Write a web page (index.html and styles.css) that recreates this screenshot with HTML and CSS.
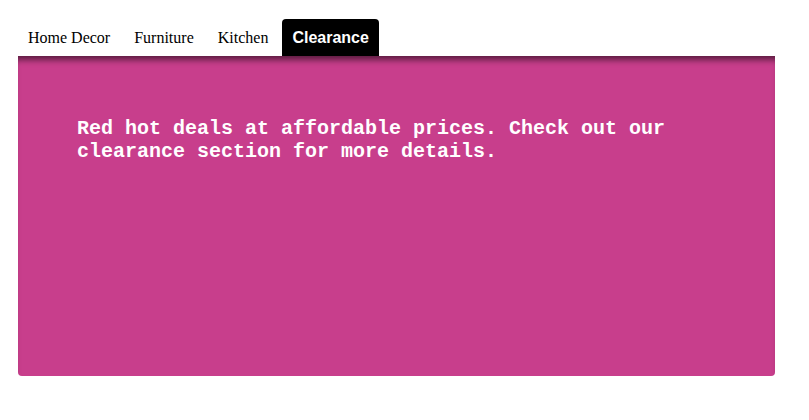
FILE: index.html
```html
<!DOCTYPE html>
<html>
<head>
<meta charset="utf-8">
<link rel="stylesheet" href="styles.css">
</head>
<body>
<div class="wrap">
  <nav class="tabs">
    <a class="tab">Home Decor</a>
    <a class="tab">Furniture</a>
    <a class="tab">Kitchen</a>
    <a class="tab active">Clearance</a>
  </nav>
  <section class="panel">
    <p>Red hot deals at affordable prices. Check out our clearance section for more details.</p>
  </section>
</div>
</body>
</html>
```
FILE: styles.css
```css
html, body { margin: 0; padding: 0; background: #fff; }
.wrap { margin: 19px 0 0 18px; width: 757px; }
.tabs { display: flex; gap: 4px; }
.tab {
  font-family: "Liberation Serif", "Times New Roman", serif;
  font-size: 16px;
  line-height: 17px;
  padding: 10px;
  color: #000;
  border-radius: 4px 4px 0 0;
}
.tab.active {
  background: #000;
  color: #fff;
  font-family: "Liberation Sans", Arial, sans-serif;
  font-weight: bold;
}
.panel {
  background: #c83e8c;
  height: 320px;
  box-sizing: border-box;
  padding: 61px 59px 0;
  border-radius: 0 0 4px 4px;
  box-shadow: inset 0 8px 6px -4px rgba(0,0,0,0.55);
}
.panel p {
  margin: 0;
  font-family: "Liberation Mono", "Courier New", monospace;
  font-weight: bold;
  font-size: 20px;
  line-height: 23px;
  color: #fff;
  max-width: 620px;
}
```
